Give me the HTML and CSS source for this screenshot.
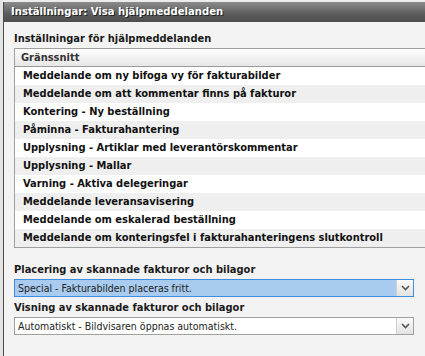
FILE: index.html
```html
<!DOCTYPE html>
<html lang="sv">
<head>
  <meta charset="UTF-8" />
  <title>Inställningar: Visa hjälpmeddelanden</title>
  <link rel="stylesheet" href="styles.css">
</head>
<body>
  <div class="page">
    <div class="backdrop"></div>

    <div class="dialog">
      <div class="titlebar">Inställningar: Visa hjälpmeddelanden</div>

      <div class="dialog-body">
        <div class="section-label">Inställningar för hjälpmeddelanden</div>

        <div class="listbox">
          <div class="list-header">Gränssnitt</div>
          <div class="list-row">Meddelande om ny bifoga vy för fakturabilder</div>
          <div class="list-row">Meddelande om att kommentar finns på fakturor</div>
          <div class="list-row">Kontering - Ny beställning</div>
          <div class="list-row">Påminna - Fakturahantering</div>
          <div class="list-row">Upplysning - Artiklar med leverantörskommentar</div>
          <div class="list-row">Upplysning - Mallar</div>
          <div class="list-row">Varning - Aktiva delegeringar</div>
          <div class="list-row">Meddelande leveransavisering</div>
          <div class="list-row">Meddelande om eskalerad beställning</div>
          <div class="list-row">Meddelande om konteringsfel i fakturahanteringens slutkontroll</div>
        </div>

        <!-- dropdowns -->
        <div class="field">
          <div class="section-label">Placering av skannade fakturor och bilagor</div>
          <div class="select focused">
            <span class="select-value">Special - Fakturabilden placeras fritt.</span>
            <span class="select-btn">
              <svg width="9" height="6" viewBox="0 0 9 6"><polyline points="1,1 4.5,4.5 8,1" fill="none" stroke="#555" stroke-width="1.6"/></svg>
            </span>
          </div>
        </div>

        <div class="field">
          <div class="section-label">Visning av skannade fakturor och bilagor</div>
          <div class="select">
            <span class="select-value">Automatiskt - Bildvisaren öppnas automatiskt.</span>
            <span class="select-btn">
              <svg width="9" height="6" viewBox="0 0 9 6"><polyline points="1,1 4.5,4.5 8,1" fill="none" stroke="#555" stroke-width="1.6"/></svg>
            </span>
          </div>
        </div>
      </div>
    </div>
  </div>
</body>
</html>
```

FILE: styles.css
```css
body {
  margin: 0;
  background-color: #ececec;
  font-family: 'DejaVu Sans Condensed', 'DejaVu Sans', sans-serif;
  font-size: 11px;
  color: #111;
  overflow: hidden;
}

.page {
  display: flex;
  height: 356px;
}

.backdrop {
  width: 3px;
  flex-shrink: 0;
  background-color: #e4e4e4;
}

.dialog {
  margin-top: 2px;
  width: 450px;
  flex-shrink: 0;
  border-left: 1px solid #4a4a4a;
  background-color: #f3f3f3;
}

.titlebar {
  height: 20px;
  line-height: 20px;
  padding-left: 7px;
  background: linear-gradient(#8c8c8c, #5c5c5c 60%, #4e4e4e);
  color: white;
  font-weight: bold;
  font-size: 11.2px;
  text-shadow: 1px 1px 0 #222;
}

.dialog-body {
  padding: 10px 0 0 10px;
}

.section-label {
  font-weight: bold;
  line-height: 14px;
  color: #1a1a1a;
  margin-bottom: 2px;
}

.listbox {
  border: 1px solid #a0a0a0;
  border-right: none;
  background-color: white;
}

.list-header {
  height: 17px;
  line-height: 17px;
  padding-left: 6px;
  font-weight: bold;
  color: #333;
  background: linear-gradient(#ffffff, #e6e6e6);
  border-bottom: 1px solid #9a9a9a;
}

.list-row {
  height: 18px;
  line-height: 18px;
  padding-left: 8px;
  font-weight: bold;
  color: #111;
}

.list-row:nth-child(odd) {
  background-color: #efefef;
}

.field {
  margin-top: 15px;
}

.field + .field {
  margin-top: 4px;
}

.select {
  display: flex;
  width: 398px;
  height: 16px;
  border: 1px solid #a0a0a0;
  background-color: white;
  margin-top: 2px;
}

.select.focused {
  border-color: #3d8ee0;
  background-color: #a8cbef;
}

.select-value {
  flex: 1;
  line-height: 16px;
  padding-left: 3px;
  font-size: 10.5px;
  color: #222;
}

.select-btn {
  width: 16px;
  display: flex;
  align-items: center;
  justify-content: center;
  border-left: 1px solid #d0d0d0;
  background: linear-gradient(#fafafa, #e2e2e2);
}
```
